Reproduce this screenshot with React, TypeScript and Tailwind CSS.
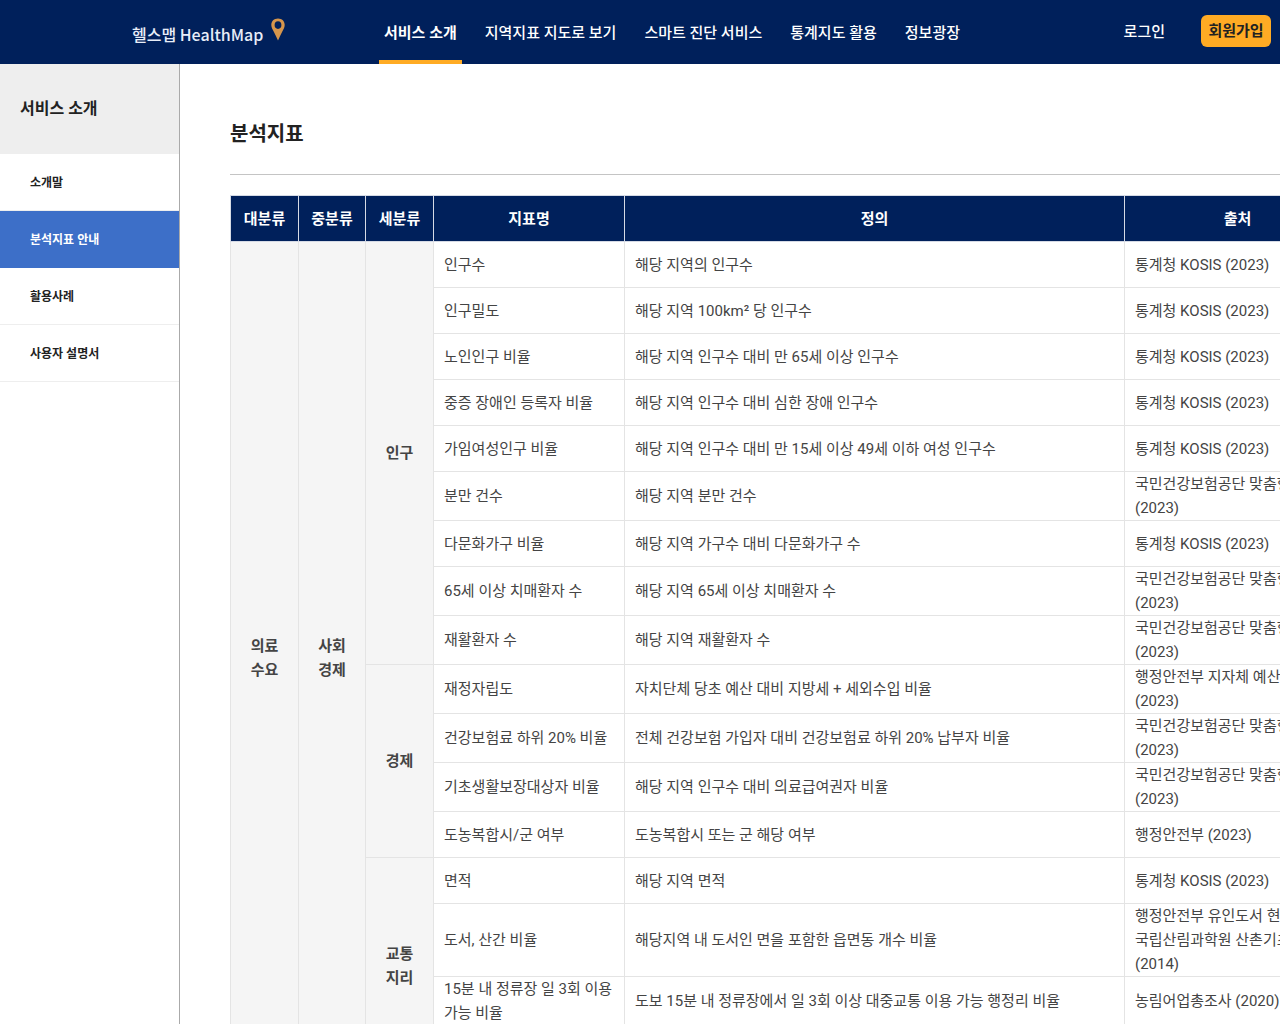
import { clsx } from "clsx";

interface Indicator {
  name: string[];
  definition: string;
  source: string[];
}

interface Group {
  label: string[];
  rows: Indicator[];
}

const NAV = ["서비스 소개", "지역지표 지도로 보기", "스마트 진단 서비스", "통계지도 활용", "정보광장"];
const SIDE_MENU = ["소개말", "분석지표 안내", "활용사례", "사용자 설명서"];
const COLUMNS = ["대분류", "중분류", "세분류", "지표명", "정의", "출처"];

const KOSIS = ["통계청 KOSIS (2023)"];
const NHIS = ["국민건강보험공단 맞춤형", "(2023)"];

const GROUPS: Group[] = [
  {
    label: ["인구"],
    rows: [
      { name: ["인구수"], definition: "해당 지역의 인구수", source: KOSIS },
      { name: ["인구밀도"], definition: "해당 지역 100km² 당 인구수", source: KOSIS },
      { name: ["노인인구 비율"], definition: "해당 지역 인구수 대비 만 65세 이상 인구수", source: KOSIS },
      { name: ["중증 장애인 등록자 비율"], definition: "해당 지역 인구수 대비 심한 장애 인구수", source: KOSIS },
      { name: ["가임여성인구 비율"], definition: "해당 지역 인구수 대비 만 15세 이상 49세 이하 여성 인구수", source: KOSIS },
      { name: ["분만 건수"], definition: "해당 지역 분만 건수", source: NHIS },
      { name: ["다문화가구 비율"], definition: "해당 지역 가구수 대비 다문화가구 수", source: KOSIS },
      { name: ["65세 이상 치매환자 수"], definition: "해당 지역 65세 이상 치매환자 수", source: NHIS },
      { name: ["재활환자 수"], definition: "해당 지역 재활환자 수", source: NHIS },
    ],
  },
  {
    label: ["경제"],
    rows: [
      { name: ["재정자립도"], definition: "자치단체 당초 예산 대비 지방세 + 세외수입 비율", source: ["행정안전부 지자체 예산개요", "(2023)"] },
      { name: ["건강보험료 하위 20% 비율"], definition: "전체 건강보험 가입자 대비 건강보험료 하위 20% 납부자 비율", source: NHIS },
      { name: ["기초생활보장대상자 비율"], definition: "해당 지역 인구수 대비 의료급여권자 비율", source: NHIS },
      { name: ["도농복합시/군 여부"], definition: "도농복합시 또는 군 해당 여부", source: ["행정안전부 (2023)"] },
    ],
  },
  {
    label: ["교통", "지리"],
    rows: [
      { name: ["면적"], definition: "해당 지역 면적", source: KOSIS },
      { name: ["도서, 산간 비율"], definition: "해당지역 내 도서인 면을 포함한 읍면동 개수 비율", source: ["행정안전부 유인도서 현황", "국립산림과학원 산촌기초", "(2014)"] },
      { name: ["15분 내 정류장 일 3회 이용", "가능 비율"], definition: "도보 15분 내 정류장에서 일 3회 이상 대중교통 이용 가능 행정리 비율", source: ["농림어업총조사 (2020)"] },
      { name: ["", ""], definition: "", source: [] },
    ],
  },
];

const TOTAL_ROWS = GROUPS.reduce((sum, g) => sum + g.rows.length, 0);

function Lines({ items }: { items: string[] }) {
  return (
    <>
      {items.map((line, i) => (
        <span key={i} className="block min-h-6 whitespace-nowrap">{line}</span>
      ))}
    </>
  );
}

function CategoryCell({ label, span }: { label: string[]; span: number }) {
  return (
    <th scope="rowgroup" rowSpan={span} className="border border-[#e4e4e4] bg-[#f5f5f5] text-center align-middle font-bold">
      <Lines items={label} />
    </th>
  );
}

function Header() {
  return (
    <header className="flex h-16 shrink-0 items-center bg-[#00205b] pr-[9px] text-[15px] text-white">
      <a href="#" className="ml-[132px] flex w-[247px] shrink-0 items-center gap-2 text-base font-medium text-[#e8edf8]">
        <span className="pt-1 font-['Noto_Sans_CJK_KR',sans-serif] whitespace-nowrap">헬스맵 HealthMap</span>
        <svg viewBox="0 0 14 24" className="mb-1 h-6 w-3.5" aria-hidden="true">
          <path fillRule="evenodd" fill="#d6964c" d="M7 0.500C3 0.500 0.300 3.300 0.300 7c0 2.400 1.300 4.500 2.500 6.800 1.400 2.700 2.800 5.500 4.200 8.700 1.400-3.200 2.800-6 4.200-8.700 1.200-2.300 2.500-4.400 2.500-6.800C13.700 3.300 11 0.500 7 0.500zM7 3.300a3.400 3.800 0 1 1 0 7.600a3.400 3.800 0 1 1 0-7.600z" />
        </svg>
      </a>
      <nav className="flex h-full gap-[18px]">
        {NAV.map((item, i) => (
          <a
            key={item}
            href="#"
            className={clsx(
              "flex items-center border-b-4 px-[5px] pt-1.5 whitespace-nowrap",
              i === 0 ? "border-b-[#ffab24] font-bold" : "border-b-transparent font-medium"
            )}
          >
            {item}
          </a>
        ))}
      </nav>
      <div className="ml-auto flex items-center gap-9">
        <a href="#" className="font-medium whitespace-nowrap">로그인</a>
        <button className="mb-0.5 h-8 w-[70px] rounded-md bg-[#ffab24] font-bold whitespace-nowrap text-[#222222]">회원가입</button>
      </div>
    </header>
  );
}

function Sidebar() {
  return (
    <aside className="w-[180px] shrink-0 border-r border-[#aaaaaa]">
      <h2 className="flex h-[90px] items-center bg-[#eeeeee] px-5 text-base font-bold">서비스 소개</h2>
      <ul>
        {SIDE_MENU.map((item) => (
          <li key={item}>
            <a
              href="#"
              className={clsx(
                "flex h-[57px] items-center border-b px-[30px] pt-0.5 text-xs font-bold",
                item === "분석지표 안내" ? "border-[#3d6fc8] bg-[#3d6fc8] text-white" : "border-[#eeeeee]"
              )}
            >
              {item}
            </a>
          </li>
        ))}
      </ul>
    </aside>
  );
}

export default function App() {
  return (
    <div className="flex h-screen flex-col overflow-hidden bg-white font-[Roboto,'Noto_Sans_CJK_KR',sans-serif] text-[#222222]">
      <Header />
      <div className="flex min-h-0 flex-1">
        <Sidebar />
        <main className="min-w-0 flex-1 overflow-auto pt-[50px] pl-[50px] [scrollbar-width:none]">
          <h1 className="mb-5 h-[61px] border-b border-[#c4c4c4] pt-1 text-xl leading-8 font-bold">분석지표</h1>
          <table className="w-[1120px] table-fixed border-collapse text-[15px] leading-6 text-[#444444]">
            <colgroup>
              <col className="w-[68px]" />
              <col className="w-[67px]" />
              <col className="w-[68px]" />
              <col className="w-[191px]" />
              <col className="w-[500px]" />
              <col className="w-[226px]" />
            </colgroup>
            <thead>
              <tr className="h-[46px] bg-[#00205b] text-white">
                {COLUMNS.map((c) => (
                  <th key={c} scope="col" className="border border-[#d5dae5] font-bold">{c}</th>
                ))}
              </tr>
            </thead>
            <tbody>
              {GROUPS.map((group, g) =>
                group.rows.map((row, i) => (
                  <tr key={row.name[0]} className="h-[46px]">
                    {g === 0 && i === 0 && (
                      <>
                        <CategoryCell label={["의료", "수요"]} span={TOTAL_ROWS} />
                        <CategoryCell label={["사회", "경제"]} span={TOTAL_ROWS} />
                      </>
                    )}
                    {i === 0 && <CategoryCell label={group.label} span={group.rows.length} />}
                    <td className="border border-[#e4e4e4] px-2.5"><Lines items={row.name} /></td>
                    <td className="border border-[#e4e4e4] px-2.5">{row.definition}</td>
                    <td className="border border-[#e4e4e4] px-2.5"><Lines items={row.source} /></td>
                  </tr>
                ))
              )}
            </tbody>
          </table>
        </main>
      </div>
    </div>
  );
}
